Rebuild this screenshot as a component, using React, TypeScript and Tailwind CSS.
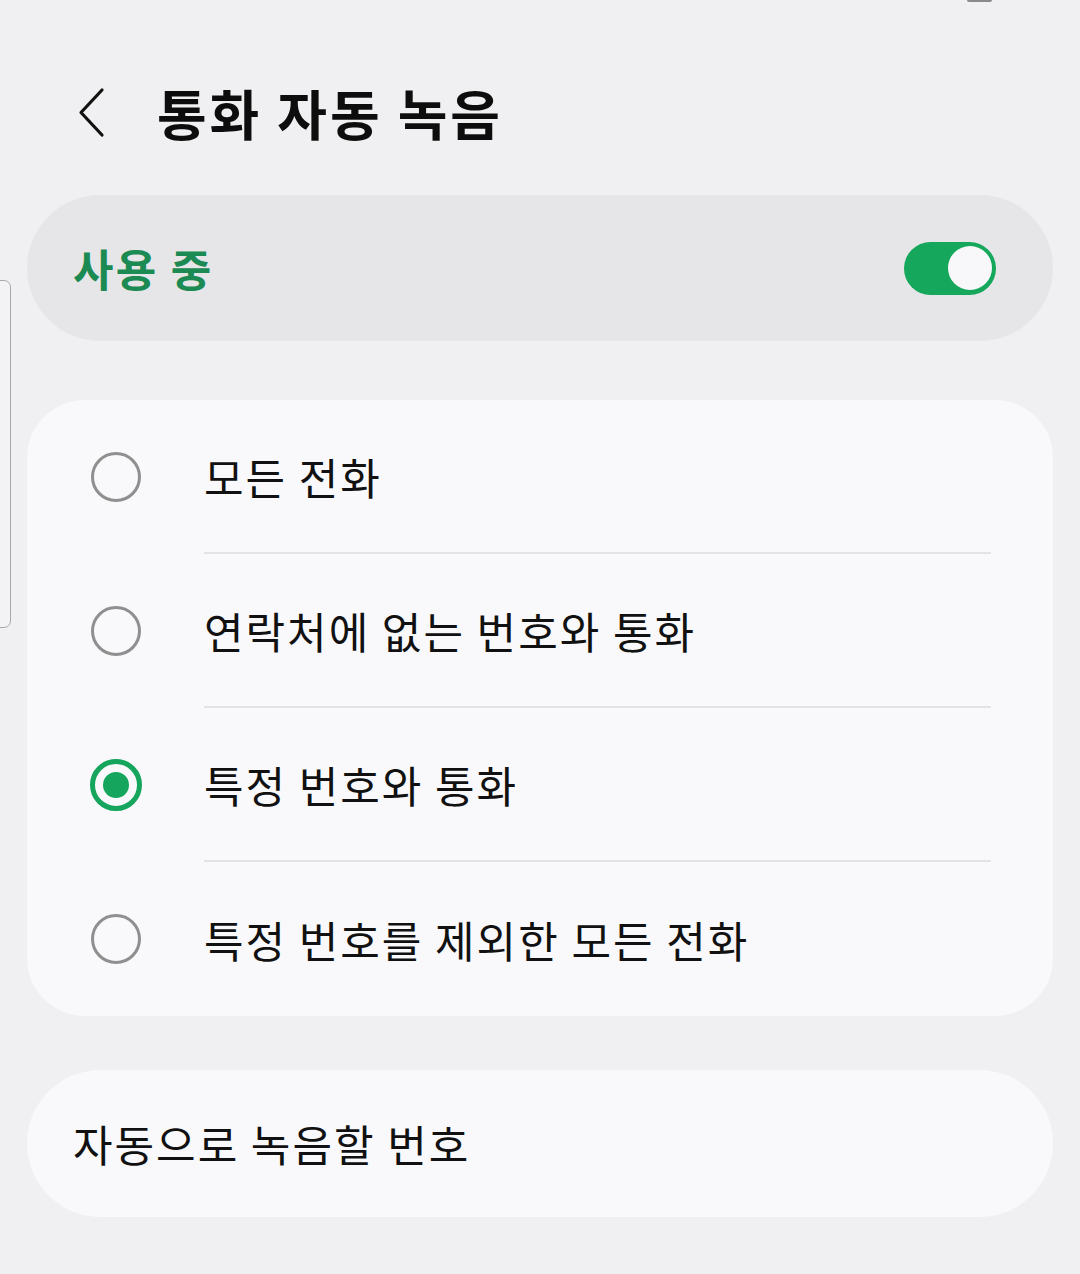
import React, { useState } from 'react';

const options = [
  '모든 전화',
  '연락처에 없는 번호와 통화',
  '특정 번호와 통화',
  '특정 번호를 제외한 모든 전화',
];

const Radio: React.FC<{ checked: boolean }> = ({ checked }) =>
  checked ? (
    <span className="flex h-[52px] w-[52px] items-center justify-center rounded-full border-[5px] border-[#15a55c]">
      <span className="h-[26px] w-[26px] rounded-full bg-[#15a55c]" />
    </span>
  ) : (
    <span className="h-[50px] w-[50px] rounded-full border-[3px] border-[#8f8f8f]" />
  );

const App: React.FC = () => {
  const [enabled, setEnabled] = useState(true);
  const [selected, setSelected] = useState(2);

  return (
    <div className="relative min-h-[1274px] w-full overflow-hidden bg-[#f0f0f2] font-['Noto_Sans_CJK_KR','Noto_Sans',sans-serif] text-[#111]">
      {/* status bar remnant + edge panel handle */}
      <div className="absolute right-[88px] top-0 h-[2px] w-[25px] rounded-b bg-[#8a8a8a]" />
      <div className="absolute left-[-8px] top-[280px] h-[348px] w-[19px] rounded-[7px] border border-[#a9a9ab] bg-[#f3f3f5]" />

      {/* header */}
      <div className="mt-[70px] flex h-[86px] items-center">
        <button className="ml-[74px] flex h-[56px] w-[34px] items-center justify-center">
          <svg width="30" height="52" viewBox="0 0 30 52" fill="none">
            <path d="M26 3 L5 25.5 L26 48" stroke="#111" strokeWidth="3.2" strokeLinecap="round" strokeLinejoin="round" />
          </svg>
        </button>
        <h1 className="ml-[49px] text-[54px] font-bold leading-none tracking-[2.9px] text-[#0d0d0d]">통화 자동 녹음</h1>
      </div>

      <div className="flex flex-col px-[27px]">
        {/* master switch */}
        <div className="mt-[39px] flex h-[146px] items-center justify-between rounded-full bg-[#e6e6e8] pl-[46px] pr-[57px]">
          <span className="text-[44px] font-bold leading-none tracking-[2.3px] text-[#1c8a53]">사용 중</span>
          <button
            onClick={() => setEnabled(!enabled)}
            className={`flex h-[53px] w-[92px] items-center rounded-full px-[4px] ${enabled ? 'justify-end bg-[#15a85c]' : 'justify-start bg-[#b5b5b7]'}`}
          >
            <span className="h-[44px] w-[44px] rounded-full bg-[#f8f8fa]" />
          </button>
        </div>

        {/* options */}
        <div className="mt-[59px] flex flex-col rounded-[58px] bg-[#f9f9fb]">
          {options.map((label, i) => (
            <div key={label} onClick={() => setSelected(i)} className="flex h-[154px] items-stretch">
              <div className="flex w-[177px] shrink-0 items-center justify-center">
                <Radio checked={selected === i} />
              </div>
              <div className={`mr-[62px] flex flex-1 items-center ${i < options.length - 1 ? 'border-b-2 border-[#e3e3e5]' : ''}`}>
                <span className="text-[43px] leading-none tracking-[2px]">{label}</span>
              </div>
            </div>
          ))}
        </div>

        {/* numbers */}
        <div className="mt-[54px] flex h-[147px] items-center rounded-full bg-[#f9f9fb] pl-[46px]">
          <span className="text-[43px] leading-none tracking-[2px]">자동으로 녹음할 번호</span>
        </div>
      </div>
    </div>
  );
};

export default App;
